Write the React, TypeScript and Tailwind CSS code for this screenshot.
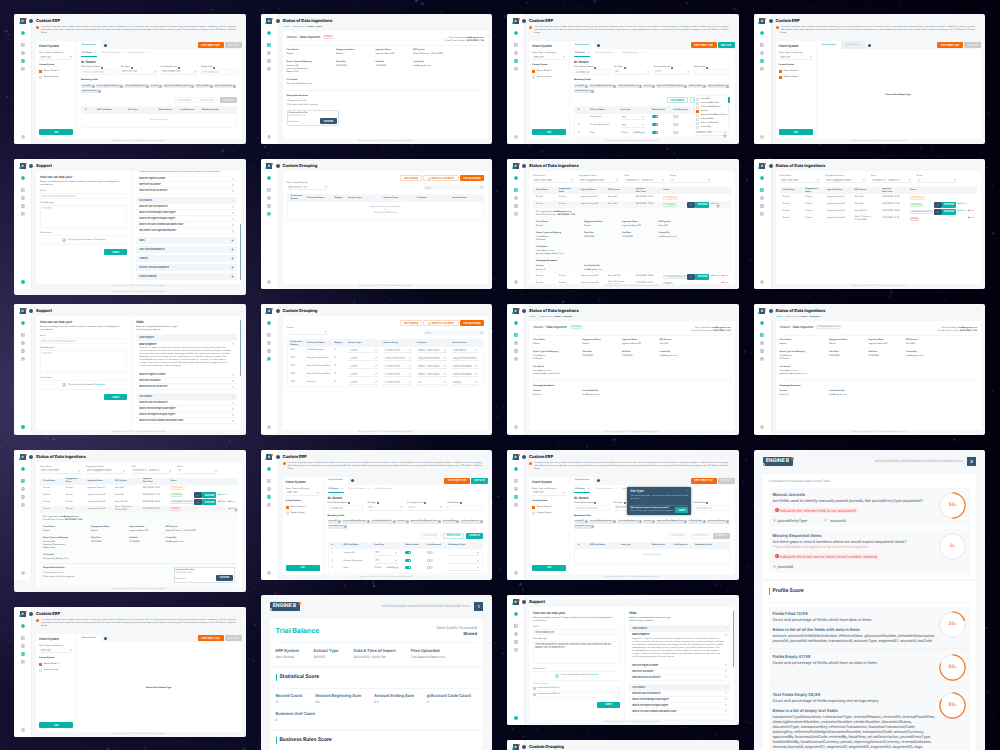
import { Fragment } from 'react'
import type { ReactNode } from 'react'
import {
  Check,
  ChevronDown,
  CirclePlus,
  Columns3,
  Download,
  FileText,
  FileUp,
  MessageSquareText,
  Minus,
  MousePointer2,
  Plus,
  Search,
  Server,
  Settings,
  X,
} from 'lucide-react'

const cn = (...parts: (string | false | undefined)[]) => parts.filter(Boolean).join(' ')

/* ---------- background ---------- */

const makeStars = (count: number) => {
  let seed = 7
  const next = () => {
    seed = (seed * 16807) % 2147483647
    return seed / 2147483647
  }
  return Array.from({ length: count }, () => ({
    x: next() * 1000,
    y: next() * 750,
    r: 0.5 + next() * next() * 1.1,
    o: 0.05 + next() * next() * 0.24,
  }))
}

const stars = makeStars(2600)

function NightSky() {
  return (
    <svg
      className="absolute inset-0 h-full w-full"
      viewBox="0 0 1000 750"
      preserveAspectRatio="xMidYMid slice"
      aria-hidden="true"
    >
      <defs>
        <linearGradient id="sky" x1="0" x2="1">
          <stop offset="0" stopColor="#131031" />
          <stop offset="0.45" stopColor="#06061b" />
          <stop offset="1" stopColor="#010110" />
        </linearGradient>
        <radialGradient id="haze">
          <stop offset="0" stopColor="#4a3d6e" stopOpacity="0.7" />
          <stop offset="1" stopColor="#4a3d6e" stopOpacity="0" />
        </radialGradient>
      </defs>
      <rect width="1000" height="750" fill="url(#sky)" />
      <ellipse cx="20" cy="400" rx="420" ry="290" fill="url(#haze)" />
      {stars.map((s, i) => (
        <circle key={i} cx={s.x} cy={s.y} r={s.r} fill="#b9c0e6" opacity={s.o} />
      ))}
    </svg>
  )
}

/* ---------- shared controls ---------- */

const buttonStyles = {
  teal: 'bg-[#08b3a9] text-white',
  orange: 'bg-[#f56a0a] text-white',
  gray: 'bg-[#cccccc] text-[#eeeeee]',
  navy: 'bg-[#36566f] text-white',
  tealOutline: 'border border-[#b9e9e5] bg-white text-[#08b3a9]',
  orangeOutline: 'border border-[#fcd9c0] bg-white text-[#f56a0a]',
  ghost: 'border border-[#f4f5f6] bg-white text-[#cfd2d5]',
}

type ButtonKind = keyof typeof buttonStyles

function Button({ kind, className, children }: { kind: ButtonKind; className?: string; children: ReactNode }) {
  return (
    <button
      type="button"
      className={cn(
        'flex h-[6px] shrink-0 items-center justify-center gap-px rounded-[1px] px-[4px] font-semibold whitespace-nowrap',
        buttonStyles[kind],
        className,
      )}
    >
      {children}
    </button>
  )
}

function SelectBox({ value, label, className }: { value: string; label: string; className?: string }) {
  return (
    <span className={cn('relative flex h-[5px] items-center border-b border-[#eceef0]', className)}>
      <select aria-label={label} className="h-full w-full appearance-none truncate bg-transparent px-px text-[#8b9299]">
        <option>{value}</option>
      </select>
      <ChevronDown className="pointer-events-none absolute right-px size-[2px] text-[#333]" strokeWidth={5} />
    </span>
  )
}

function InfoDot({ className }: { className?: string }) {
  return <span className={cn('inline-block size-[2px] shrink-0 rounded-full bg-[#36566f]', className)} />
}

function Toggle({ on, label }: { on?: boolean; label: string }) {
  return (
    <span className="relative inline-flex items-center">
      <input
        type="checkbox"
        aria-label={label}
        defaultChecked={on}
        className="peer h-[3px] w-[6px] appearance-none rounded-full bg-[#dcdfe2] checked:bg-[#08b3a9]"
      />
      <span className="pointer-events-none absolute left-0 size-[3px] rounded-full border border-[#c3c7cb] bg-white peer-checked:left-[3px] peer-checked:border-[#08b3a9]" />
    </span>
  )
}

function CheckRow({ label, checked }: { label: string; checked?: boolean }) {
  return (
    <label className="flex items-center gap-[2px] font-medium">
      <input
        type="checkbox"
        defaultChecked={checked}
        className="size-[3px] shrink-0 appearance-none border border-[#dcdfe2] bg-white checked:border-[#f56a0a] checked:bg-[#f56a0a]"
      />
      <span>{label}</span>
    </label>
  )
}

function LogoMark() {
  return (
    <span className="relative flex size-[6px] items-center justify-center bg-[#36566f] text-[3px] leading-[6px] font-bold text-white">
      B
      <span className="absolute top-0 -right-px size-[2px] rounded-full bg-[#f56a0a]" />
      <span className="absolute bottom-0 -left-px size-[2px] rounded-full bg-[#08b3a9]" />
    </span>
  )
}

/* ---------- application shell ---------- */

type Page = 'status' | 'erp' | 'grouping' | 'support'

const navItems = [
  { icon: Server, page: 'status', label: 'Status of data ingestions' },
  { icon: FileText, page: 'files', label: 'Files' },
  { icon: Columns3, page: 'erp', label: 'Custom ERP' },
  { icon: MessageSquareText, page: 'grouping', label: 'Custom grouping' },
]

function Screen({
  title,
  page,
  ratio = 'aspect-video',
  overlay,
  extraFooter,
  children,
}: {
  title: string
  page: Page
  ratio?: string
  overlay?: ReactNode
  extraFooter?: boolean
  children: ReactNode
}) {
  return (
    <section className={cn('relative flex w-full shrink-0 overflow-hidden rounded-[2px] bg-[#f5f7f9]', ratio)}>
      <nav className="relative flex h-[130px] w-[18px] shrink-0 flex-col items-center border-r border-[#eef0f3] bg-white pt-[4px] pb-[5px]">
        <LogoMark />
        <span className="absolute top-[5px] -right-[2px] flex size-[4px] items-center justify-center rounded-full bg-[#36566f]" />
        <a href="#new" aria-label="New" className="mt-[7px] text-[#10bfb3]">
          <CirclePlus className="size-[4px] fill-current" />
        </a>
        <div className="mt-[8px] flex flex-col gap-[4px]">
          {navItems.map((item) => (
            <a key={item.page} href={`#${item.page}`} aria-label={item.label}>
              <item.icon
                className={cn('size-[4px]', item.page === page ? 'fill-[#8fe0da] text-[#10bfb3]' : 'text-[#a0a6ac]')}
                strokeWidth={3}
              />
            </a>
          ))}
        </div>
        <a href="#settings" aria-label="Settings" className="mt-auto">
          {page === 'support' ? (
            <span className="block size-[4px] rounded-full bg-[#10bfb3]" />
          ) : (
            <Settings className="size-[4px] text-[#a0a6ac]" strokeWidth={3} />
          )}
        </a>
      </nav>
      <div className="flex min-w-0 flex-1 flex-col px-[4px]">
        <h2 className="h-[12px] shrink-0 pt-[2px] text-[4px] leading-[10px] font-extrabold text-[#20262d]">{title}</h2>
        <div className="flex min-h-0 flex-1 flex-col overflow-hidden">{children}</div>
        <footer className="shrink-0 text-center leading-[5px] text-[#b4b9be]">
          <p>Copyright Engine B Ltd - All Rights Reserved by Engine B</p>
          {extraFooter && <p className="pt-px">Copyright Engine B Ltd - All Rights Reserved by Engine B</p>}
        </footer>
      </div>
      {overlay}
    </section>
  )
}

/* ---------- custom ERP ---------- */

const chips = [
  'journalID',
  'currencyMasterNumber',
  'effectiveDateRecord',
  'amount',
  'approvedTrialBalanceCode',
  'effectiveDate',
  'glAccountNumber',
  'enteredAmount',
]

const menuOptions = [
  'journalID',
  'currencyMasterNo',
  'effectiveDateRecord',
  'amount',
  'approvedTrialBalanceCode',
  'effectiveDate',
  'glAccountNumber',
  'enteredBy',
]

const erpRows = [
  { name: 'Account No.', type: 'Text' },
  { name: 'Account Description', type: 'Text' },
  { name: 'Date', type: 'Date' },
]

function FieldMenu() {
  return (
    <div className="absolute bottom-full left-0 z-10 flex w-[33px] flex-col gap-px rounded-[1px] bg-white px-px py-[2px] shadow-[0_0_2px_rgba(0,0,0,0.12)]">
      {menuOptions.map((option) => (
        <CheckRow key={option} label={option} checked={option === 'amount'} />
      ))}
    </div>
  )
}

function ErpTable({ filled, menu }: { filled?: boolean; menu?: boolean }) {
  return (
    <table className="mt-[3px] w-full table-fixed border border-[#f6f7f8] text-left">
      <colgroup>
        <col className="w-[10%]" />
        <col className="w-[20%]" />
        <col className="w-[20%]" />
        <col className="w-[14%]" />
        <col className="w-[14%]" />
        <col className="w-[22%]" />
      </colgroup>
      <thead>
        <tr className="h-[7px] bg-[#f3f6f8] text-[#4b6c88]">
          <th className="pl-[3px]">#</th>
          <th>ERP Field Name</th>
          <th>Data Type</th>
          <th>Mode Actuals</th>
          <th>Field Required</th>
          <th>Mandatory Fields</th>
        </tr>
      </thead>
      <tbody>
        {!filled && (
          <tr className="h-[14px]">
            <td colSpan={6} className="text-center text-[#a5abb1]">
              No Items to Display
            </td>
          </tr>
        )}
        {filled &&
          erpRows.map((row, i) => (
            <tr key={row.name} className="h-[8px]">
              <td className="pl-[3px]">{i + 1}</td>
              <td>{row.name}</td>
              <td>
                {row.type === 'Date' ? (
                  <span className="flex justify-between pr-[7px]">
                    <span>☑ Date</span>
                    <span>dd/MM/yyyy</span>
                  </span>
                ) : (
                  <SelectBox label={`${row.name} type`} value={row.type} className="w-[24px]" />
                )}
              </td>
              <td>
                <Toggle on label={`${row.name} actuals`} />
              </td>
              <td>
                <Toggle label={`${row.name} required`} />
              </td>
              <td>
                <div className="relative">
                  <SelectBox
                    label={`${row.name} mandatory field`}
                    value={menu && i === 2 ? 'Mandatory Fields' : ''}
                    className="w-[32px]"
                  />
                  {menu && i === 2 && <FieldMenu />}
                  {menu && i === 2 && (
                    <MousePointer2 className="absolute -bottom-[2px] left-[28px] size-[4px] fill-white text-[#444]" />
                  )}
                </div>
              </td>
            </tr>
          ))}
      </tbody>
    </table>
  )
}

function ErpForm({ filled, menu }: { filled?: boolean; menu?: boolean }) {
  const fields = [
    { label: 'Client System Name', value: filled ? 'GL Details 001' : 'Enter the system name' },
    { label: 'File Type', value: filled ? 'CSV' : 'Select File Type', select: true },
    { label: 'Encoding Format', value: filled ? 'UTF-8' : 'Select Format Type', select: true },
    { label: 'Header Row', value: filled ? '1' : 'Enter header row' },
  ]
  return (
    <>
      <div className="flex h-[5px] shrink-0 gap-[5px]">
        <span className="flex gap-[3px] border-b border-[#08b3a9] px-px font-semibold text-[#36566f]">
          GL Details <span>×</span>
        </span>
        <span className="flex gap-[3px] text-[#9aa0a6]">
          Chart of Accounts <span>×</span>
        </span>
        <span className="flex gap-[3px] text-[#9aa0a6]">
          Payable Balances <span>×</span>
        </span>
      </div>
      <h4 className="mt-[4px] text-[3px] font-semibold text-[#2b3138]">GL Details</h4>
      <div className="mt-[2px] grid grid-cols-4 gap-[4px]">
        {fields.map((field) => (
          <label key={field.label} className="flex flex-col">
            <span className="flex items-center gap-px font-medium">
              {field.label} <InfoDot />
            </span>
            {field.select ? (
              <SelectBox label={field.label} value={field.value} className="h-[6px]" />
            ) : (
              <input
                className="h-[6px] w-full border border-[#f4f5f6] px-px text-[#8b9299] placeholder:text-[#b8bdc2]"
                defaultValue={filled ? field.value : ''}
                placeholder={field.value}
              />
            )}
          </label>
        ))}
      </div>
      <h4 className="mt-[4px] font-bold text-[#2b3138]">Mandatory Fields</h4>
      <div className="mt-[2px] flex flex-wrap gap-px">
        {chips.map((chip) => (
          <span key={chip} className="flex h-[4px] items-center gap-px rounded-[1px] bg-[#e6ebef] pl-px font-medium text-[#5f6b76]">
            {chip}
            <span className="size-[3px] rounded-full bg-[#a9b8c5]" />
          </span>
        ))}
      </div>
      <div className="mt-[4px] flex justify-end gap-[2px]">
        <Button kind={menu ? 'tealOutline' : 'ghost'} className="h-[5px] w-[21px]">
          Clear Mapping
        </Button>
        <Button kind={filled ? 'tealOutline' : 'ghost'} className="h-[5px] w-[21px]">
          Remove Rows
        </Button>
        <Button kind={filled ? 'teal' : 'gray'} className="h-[5px] w-[17px]">
          Upload File
        </Button>
      </div>
      <ErpTable filled={filled} menu={menu} />
    </>
  )
}

function HelpTip() {
  return (
    <div className="absolute top-[29%] left-[52%] flex h-[28px] w-[64px] flex-col rounded-[1px] bg-[#36566f] px-[3px] pt-[2px] pb-[2px] text-white shadow-[0_0_3px_rgba(0,0,0,0.4)]">
      <div className="flex justify-between">
        <h4 className="text-[3px] leading-[4px] font-semibold">File Type</h4>
        <X className="size-[2px]" />
      </div>
      <p className="mt-[2px] text-[#c3d0dc]">The supported types - text or comma separated are available for import.</p>
      <div className="mt-auto flex items-center justify-between border-t border-[#4a6a84] pt-px">
        <div>
          <p className="font-bold">Didn't get an answer for your question?</p>
          <p className="text-[#c3d0dc]">We can help, get in touch with us for support</p>
        </div>
        <Button kind="teal" className="w-[13px]">
          Submit
        </Button>
      </div>
    </div>
  )
}

function ErpScreen({
  mode,
  menu,
  tip,
  systemTab,
  system,
  ready,
}: {
  mode: 'select' | 'empty' | 'filled'
  menu?: boolean
  tip?: boolean
  systemTab?: boolean
  system?: boolean
  ready?: boolean
}) {
  return (
    <Screen title="Custom ERP" page="erp" overlay={tip && <HelpTip />}>
      <div className="flex h-[15px] shrink-0 gap-[2px]">
        <span className="size-[3px] shrink-0 rounded-full bg-[#f56a0a]" />
        <p className="pr-[4px]">
          To create a new ERP map, or select one not listed in the library, click on one of the options and fill in the
          form. You can map multiple or standard tables as the System Group or a selection of the file, mapping rules
          before, which must meet their criteria to be imported. For this reason the fields are split by extract, please
          select one of them or create a group. The threshold for mapping is set at 70. Details in Custom Group.
        </p>
      </div>
      <div className="flex min-h-0 flex-1 gap-px">
        <aside className="flex w-[40px] shrink-0 flex-col rounded-[1px] bg-white px-[3px] pt-[4px] pb-[4px]">
          <h3 className="text-[3px] font-semibold text-[#2b3138]">Client System</h3>
          <label className="mt-[4px] flex flex-col">
            <span>Select Type and Mapping</span>
            <SelectBox label="Select type and mapping" value="Trade Type" />
          </label>
          <h4 className="mt-[4px] font-bold text-[#2b3138]">Custom System</h4>
          <div className="mt-[3px] flex flex-col gap-[3px]">
            <CheckRow label="Report Extract 1" checked />
            <CheckRow label="System Extract" checked={system} />
          </div>
          <Button kind="teal" className="mt-auto">
            Add
          </Button>
        </aside>
        <div className="flex min-w-0 flex-1 flex-col">
          <div className="flex h-[8px] shrink-0 items-center">
            <span className="flex h-full items-center rounded-t-[1px] bg-white px-[5px] font-bold text-[#08b3a9]">
              Report Extract
            </span>
            {systemTab && (
              <span className="flex h-full items-center bg-[#eceff2] px-[5px] text-[#9aa0a6]">System Extract</span>
            )}
            <InfoDot className="ml-[3px] size-[3px]" />
            <div className="ml-auto flex gap-px">
              <Button kind="orange" className="w-[26px]">
                Select Report Type
              </Button>
              <Button kind={ready ? 'teal' : 'gray'} className="w-[17px]">
                Save & Exit
              </Button>
            </div>
          </div>
          <div className="flex min-h-0 flex-1 flex-col overflow-hidden rounded-b-[1px] bg-white pt-[3px] pr-[5px] pl-[4px]">
            {mode === 'select' ? (
              <p className="m-auto font-bold text-[#2b3138]">Please Select Report Type</p>
            ) : (
              <ErpForm filled={mode === 'filled'} menu={menu} />
            )}
          </div>
        </div>
      </div>
    </Screen>
  )
}

/* ---------- status of data ingestions ---------- */

const badgeStyles = {
  pending: 'border-[#fce6c4] bg-[#fffaf0] text-[#f0a93c]',
  complete: 'border-[#cdeecf] bg-[#f1fbf2] text-[#46b450]',
  warning: 'border-[#dfe6ec] bg-[#f7fafc] text-[#6b7f92]',
  failed: 'border-[#fbcdd0] bg-[#fff5f5] text-[#ef4750]',
}

type BadgeKind = keyof typeof badgeStyles

const badgeText = {
  pending: 'In Progress',
  complete: 'Complete',
  warning: 'Completed with errors',
  failed: 'Failed',
}

function Badge({ kind }: { kind: BadgeKind }) {
  return (
    <span
      className={cn(
        'inline-flex h-[4px] items-center rounded-[1px] border px-px leading-[2px] font-normal whitespace-nowrap',
        badgeStyles[kind],
      )}
    >
      {badgeText[kind]}
    </span>
  )
}

function Detail({ label, lines }: { label: string; lines: string[] }) {
  return (
    <div>
      <dt className="mb-px font-bold text-[#3f6486]">{label}</dt>
      {lines.map((line) => (
        <dd key={line} className="font-medium whitespace-nowrap">
          {line}
        </dd>
      ))}
    </div>
  )
}

function DetailGrid({ failed, tight }: { failed?: boolean; tight?: boolean }) {
  return (
    <dl className={cn('grid grid-cols-[25fr_20fr_19fr_36fr]', tight ? 'gap-y-[4px]' : 'gap-y-[5px]')}>
      <Detail label="Client Name" lines={['Shared']} />
      <Detail label="Engagement Name" lines={['Shared']} />
      <Detail label="Ingestion Name" lines={['Ingestion Name 001']} />
      <Detail label="ERP System" lines={[failed ? 'Xplan 10 Custom - 10 Nov 2022' : 'Xero (UK)']} />
      <Detail
        label="Report Type and Mapping"
        lines={failed ? ['Inventory GL', 'Inventory Transactions', 'Balance One'] : ['Trial Balance', 'GL Details']}
      />
      <Detail label="Start Date" lines={['01/01/2022']} />
      <Detail label="End Date" lines={['31/12/2022']} />
      <Detail label="Created By" lines={['dev@engineb.com']} />
      <Detail
        label="File Upload"
        lines={failed ? ['FY_Load_GL_Backup_7.csv'] : ['trial_balance_7.csv', 'general_ledger_details_7.csv']}
      />
    </dl>
  )
}

function ErrorFileBox({ className }: { className?: string }) {
  return (
    <div className={cn('flex h-[16px] flex-col rounded-[1px] border border-[#d8e2ea] bg-white p-px', className)}>
      <p className="font-semibold text-[#3f6486]">Download Error File</p>
      <p className="text-[#a5abb1]">26/10/2022, 11:34</p>
      <div className="mt-auto flex items-end justify-between">
        <span>Errors.csv</span>
        <Button kind="navy" className="h-[4px] w-[17px]">
          <Download className="size-[2px]" /> Download
        </Button>
      </div>
    </div>
  )
}

function Steps() {
  return (
    <div>
      <h4 className="font-bold text-[#2b3138]">Steps to Resolve Error</h4>
      <ol className="mt-[2px] flex flex-col gap-px">
        <li>1. Download error file</li>
        <li>2. Re-upload the file for ingestion</li>
      </ol>
    </div>
  )
}

function GroupingInfo() {
  return (
    <>
      <h4 className="font-bold text-[#2b3138]">Grouping Information</h4>
      <dl className="mt-[2px] grid grid-cols-[25fr_75fr]">
        <Detail label="Version" lines={['Version 3']} />
        <Detail label="Last Updated By" lines={['dev@engineb.com']} />
      </dl>
    </>
  )
}

function StatusDetailScreen({ kind }: { kind: BadgeKind }) {
  const failed = kind === 'failed'
  return (
    <Screen title="Status of Data Ingestions" page="status">
      <p className="flex h-[5px] shrink-0 gap-[3px]">
        <a href="#status" className="font-semibold text-[#08b3a9]">
          &lt; Back
        </a>
        <span>
          Status of Data / <span className="font-semibold text-[#2b3138]">Shared - {badgeText[kind].split(' ')[0]}</span>
        </span>
      </p>
      <div className="flex-1 rounded-[1px] bg-white px-[4px] pt-[4px]">
        <div className="flex justify-between">
          <h3 className="flex items-center gap-[3px] self-start text-[3px] leading-[4px] font-medium text-[#2b3138]">
            <span>
              <span className="text-[#3f6486]">Shared</span> - Data Ingestion
            </span>
            <span className="flex text-[2px]">
              <Badge kind={kind} />
            </span>
          </h3>
          <div className="pt-[2px] text-right">
            <p>
              Data ingested by: <b className="font-semibold text-[#2b3138]">dev@engineb.com</b>
            </p>
            <p>
              Date & Time of Import: <b className="font-semibold text-[#2b3138]">26/10/2022, 11:34</b>
            </p>
          </div>
        </div>
        <div className="mt-[2px] border-t border-[#f6f7f8] pt-[3px]">
          <DetailGrid failed={failed} />
        </div>
        <div className="mt-[4px] border-t border-[#f3f4f6] pt-[4px]">
          {failed ? (
            <>
              <Steps />
              <ErrorFileBox className="mt-[3px] w-[52px]" />
            </>
          ) : (
            <GroupingInfo />
          )}
        </div>
      </div>
    </Screen>
  )
}

const ingestions: { client: string; name: string; erp: string; date: string; status: BadgeKind }[] = [
  { client: 'Shared', name: 'Ingestion Name 01', erp: 'Xero (UK)', date: '26/10/2022, 10:22', status: 'pending' },
  { client: 'Shared', name: 'Ingestion Name 02', erp: 'Xero (UK)', date: '25/10/2022, 17:40', status: 'complete' },
  { client: 'Shared', name: 'Ingestion Name 03', erp: 'Xero (UK) 3P', date: '20/10/2022, 09:22', status: 'warning' },
  { client: 'Shared', name: 'Ingestion Name 04', erp: 'Xplan 10 Custom - 10 Nov 2022', date: '12/10/2022, 14:22', status: 'failed' },
]

const filters = ['Client Name', 'Engagement Name', 'Date', 'Status']

function StatusListScreen({ open, tall }: { open?: number; tall?: boolean }) {
  return (
    <Screen title="Status of Data Ingestions" page="status" ratio={tall ? 'aspect-[13/8]' : 'aspect-video'}>
      <div className="min-h-0 flex-1 overflow-hidden rounded-[1px] bg-white px-[4px] pt-[4px]">
        <div className="grid w-[90%] grid-cols-4 gap-[5px]">
          {filters.map((filter) => (
            <label key={filter} className="flex flex-col">
              <span>{filter}</span>
              <SelectBox
                label={filter}
                value={filter === 'Status' ? 'All' : filter === 'Date' ? '▢ dd/mm/yyyy   -   dd/mm/yyyy' : `Select ${filter}`}
              />
            </label>
          ))}
        </div>
        <table className="mt-[4px] w-full table-fixed text-left">
          <colgroup>
            <col className="w-[13%]" />
            <col className="w-[11%]" />
            <col className="w-[14%]" />
            <col className="w-[14%]" />
            <col className="w-[14%]" />
            <col className="w-[12%]" />
            <col className="w-[22%]" />
          </colgroup>
          <thead>
            <tr className="h-[7px] bg-[#f3f6f8] text-[#4b6c88]">
              <th className="pl-[3px]">Client Name</th>
              <th>
                Engagement
                <br />
                Name
              </th>
              <th>Ingestion Name</th>
              <th>ERP System</th>
              <th>
                Ingestion
                <br />
                Date/Time
              </th>
              <th>Status</th>
              <th aria-label="Actions" />
            </tr>
          </thead>
          <tbody>
            {ingestions.map((row, i) => (
              <Fragment key={row.name}>
                <tr className={cn('h-[7px]', open === i && 'bg-[#f5f7f9]')}>
                  <td className="pl-[3px]">{row.client}</td>
                  <td>{row.client}</td>
                  <td>{row.name}</td>
                  <td className="pr-[8px]">{row.erp}</td>
                  <td>{row.date}</td>
                  <td>
                    <span className="flex">
                      <Badge kind={row.status} />
                    </span>
                  </td>
                  <td>
                    <div className="flex items-center">
                      {(row.status === 'complete' || row.status === 'warning') && (
                        <>
                          <Button kind="navy" className="h-[4px] w-[4px] px-0">
                            ▪
                          </Button>
                          <Button kind="teal" className="h-[4px] w-[14px] px-0">
                            <Download className="size-[2px]" /> Download
                          </Button>
                          <a href="#details" className="ml-[2px] whitespace-nowrap text-[#08b3a9]">
                            ◉ Details
                          </a>
                        </>
                      )}
                      {(row.status === 'warning' || row.status === 'failed') && (
                        <a href="#error" className="mr-[2px] ml-auto whitespace-nowrap text-[#ef4750]">
                          ◉ Error
                        </a>
                      )}
                      {open === i && (
                        <span className="relative">
                          <MousePointer2 className="absolute -top-px -left-[4px] size-[4px] fill-white text-[#444]" />
                        </span>
                      )}
                    </div>
                  </td>
                </tr>
                {open === i && (
                  <tr className="bg-[#fbfcfc]">
                    <td colSpan={7} className="px-[3px] pt-[3px] pb-px">
                      <p>
                        Data ingested by: <b className="font-semibold text-[#2b3138]">dev@engineb.com</b>
                      </p>
                      <p>
                        Date & Time of Import: <b className="font-semibold text-[#2b3138]">26/10/2022, 11:34</b>
                      </p>
                      <div className="mt-[4px]">
                        <DetailGrid tight failed={row.status === 'failed'} />
                      </div>
                      {row.status === 'failed' ? (
                        <div className="mt-[2px] flex items-start justify-between border-t border-[#eef0f2] pt-[3px] pb-[3px]">
                          <Steps />
                          <ErrorFileBox className="w-[61px] border-[#b5c7d5]" />
                        </div>
                      ) : (
                        <div className="mt-[4px]">
                          <GroupingInfo />
                        </div>
                      )}
                    </td>
                  </tr>
                )}
              </Fragment>
            ))}
          </tbody>
        </table>
      </div>
    </Screen>
  )
}

/* ---------- custom grouping ---------- */

const accounts = [
  { id: '1001', name: 'Trade Receivables', type: '1. Assets', group: '1. Current Assets', caption: 'Property, Plant & Equip', account: 'Trade Debtors' },
  { id: '1012', name: 'Long term investments', type: '1. Assets', group: '1. Non-current Assets', caption: 'Long-term investments', account: 'Long-term Investments' },
  { id: '1070', name: 'Prepaid and Accrued Exp', type: '1. Assets', group: '1. Current Assets', caption: 'Property, Plant & Equip', account: 'Trade & receivables' },
  { id: '1080', name: 'Prepaid and Accrued Exp', type: '1. Assets', group: '1. Current Assets', caption: 'Property, Plant & Equip', account: 'Trade & receivables' },
  { id: '1140', name: 'Inventory', type: '1. Assets', group: '1. Current Assets', caption: 'VAT', account: 'Building' },
]

function GroupingScreen({ filled }: { filled?: boolean }) {
  return (
    <Screen title="Custom Grouping" page="grouping">
      <div className="min-h-0 flex-1 overflow-hidden rounded-[1px] bg-white px-[4px] pt-[4px]">
        <div className="flex justify-end gap-px">
          <Button kind="orangeOutline" className="w-[22px]">
            Save Grouping
          </Button>
          <Button kind="orangeOutline" className="w-[36px]">
            ⇪ Upload COA TB/Balance
          </Button>
          <Button kind="orange" className="w-[24px]">
            Existing Grouping
          </Button>
        </div>
        <div className="mt-px flex items-end justify-between">
          <label className="flex w-[41px] flex-col">
            <span>{filled ? 'Version' : 'Select Client/Mapping'}</span>
            <SelectBox label="Version" value={filled ? '1' : 'Select Version - Live'} />
          </label>
          <label className="flex h-[5px] w-[60px] items-center bg-[#f5f7f9] px-px">
            <input aria-label="Search" placeholder="Search" className="h-full min-w-0 flex-1 placeholder:text-[#b8bdc2]" />
            <Search className="size-[3px] text-[#9aa0a6]" />
          </label>
        </div>
        <table className="mt-[4px] w-full table-fixed border border-[#f6f7f8] text-left">
          <colgroup>
            <col className="w-[10%]" />
            <col className="w-[14%]" />
            <col className="w-[7%]" />
            <col className="w-[18%]" />
            <col className="w-[17%]" />
            <col className="w-[18%]" />
            <col className="w-[16%]" />
          </colgroup>
          <thead>
            <tr className="h-[7px] bg-[#f3f6f8] text-[#4b6c88]">
              <th className="pl-[3px]">
                GL Account
                <br />
                Number
              </th>
              <th>GL Account Name</th>
              <th>Mapped</th>
              <th>Account Type</th>
              <th>Account Group</th>
              <th>Is Caption</th>
              <th>Account Name</th>
            </tr>
          </thead>
          <tbody>
            {filled ? (
              accounts.map((row) => (
                <tr key={row.id} className="h-[8px]">
                  <td className="pl-[3px]">{row.id}</td>
                  <td className="whitespace-nowrap">{row.name}</td>
                  <td>☑</td>
                  {[row.type, row.group, row.caption, row.account].map((value, i) => (
                    <td key={i} className="pr-[5px]">
                      <SelectBox label={`${row.name} ${value}`} value={value} />
                    </td>
                  ))}
                </tr>
              ))
            ) : (
              <tr className="h-[19px] text-center text-[#8b9299]">
                <td colSpan={7}>
                  Please use to Existing Grouping
                  <br />
                  or
                  <br />
                  Upload COA TB/Balance
                </td>
              </tr>
            )}
          </tbody>
        </table>
      </div>
    </Screen>
  )
}

/* ---------- support ---------- */

const answer =
  'Engine B is a digital transformation business company that uses a common data platform to transform the work of professional services. Access to quality data, enabling intelligent and deep learning based, powered by the best technology available. Our collaboration approach has been developed with our technology partners, industry users and the UK professional bodies. The Knowledge Graph analysis can be used on all of the models for all parties, for client reports, analysis, audit and risk to the same level. Making available tools and time to insight which are transforming the quality of the work they do.'

const aboutQuestions = ['What are Engine B Funded?', 'Where are you based?', 'What sectors do you service?']

const productQuestions = [
  'What are your core products?',
  'What is the Knowledge Graph Engine?',
  'What is the Engine B Insights Engine?',
  'What is the Audit Common Data Model(CDM)?',
  "Why doesn't use Engine Marketplace?",
]

const moreSections = ['SMEs', 'Data Types and Mandates', 'Usability', 'Security, Risk and Compliance', 'Product Roadmap']

function FaqHeader({ title, closed }: { title: string; closed?: boolean }) {
  return (
    <button
      type="button"
      className="mt-[2px] flex h-[7px] w-full shrink-0 items-center justify-between bg-[#f3f6f8] px-[3px] font-bold text-[#3f6486]"
    >
      {title}
      {closed ? <Plus className="size-[3px]" strokeWidth={3} /> : <Minus className="size-[2px]" />}
    </button>
  )
}

function FaqList({ questions }: { questions: string[] }) {
  return (
    <div className="pb-px">
      {questions.map((question) => (
        <button
          key={question}
          type="button"
          className="flex h-[6px] w-full items-center justify-between border-b border-[#f5f6f7] px-[3px] font-semibold text-[#3b4249]"
        >
          {question}
          <ChevronDown className="size-[2px]" strokeWidth={5} />
        </button>
      ))}
    </div>
  )
}

function SupportScreen({ scrolled, sent }: { scrolled?: boolean; sent?: boolean }) {
  return (
    <Screen
      title="Support"
      page="support"
      ratio={scrolled ? 'aspect-[17/10]' : 'aspect-video'}
      extraFooter={scrolled}
    >
      <div className="grid min-h-0 flex-1 grid-cols-[95fr_109fr] gap-px">
        <form className="flex flex-col bg-white px-[4px] pt-[4px]">
          <h3 className="text-[3px] leading-[4px] font-semibold text-[#2b3138]">How can we help you?</h3>
          <p className="mt-[2px] font-medium">
            Support is usually monitored. Contact us with our customer support building admin
            <br />
            on a chat box.
          </p>
          <label className="mt-[3px] flex flex-col">
            Email*
            <input
              type="email"
              className="h-[6px] border border-[#f4f5f6] px-px placeholder:text-[#b8bdc2]"
              placeholder="Enter your registered email address"
              defaultValue={sent ? 'johndoe@gmail.com' : ''}
            />
          </label>
          <label className="mt-[3px] flex flex-col">
            Your Message*
            <textarea
              className="h-[23px] resize-none border border-[#f4f5f6] px-px pt-px placeholder:text-[#b8bdc2]"
              placeholder="Type here..."
              defaultValue={
                sent ? 'There was a problem to upload the custom ERP extract and the data set was not mapped, can you please assist?' : ''
              }
            />
          </label>
          <p className="mt-[4px]">Attachments</p>
          <div className="flex h-[10px] items-center justify-center gap-[2px] border-y border-[#f5f6f7]">
            <FileUp className="size-[4px] text-[#08b3a9]" />
            <span>
              Drag and drop files here or <a href="#browse" className="font-semibold text-[#08b3a9]">Choose file</a>
            </span>
          </div>
          {sent && (
            <div className="mt-[2px] flex flex-col">
              <p className="text-[#a5abb1]">2 Files attached</p>
              {['customerextract001.csv', 'customerextract002.csv'].map((file) => (
                <p key={file} className="flex h-[6px] items-center gap-px border-b border-[#f5f6f7]">
                  <FileText className="size-[3px] text-[#08b3a9]" /> {file}
                  <X className="ml-auto size-[2px]" />
                </p>
              ))}
            </div>
          )}
          <Button kind="teal" className="mt-[4px] w-[23px] self-end">
            Submit
          </Button>
        </form>
        <div className="relative min-h-0 overflow-hidden bg-white pr-[4px] pl-[4px]">
          {scrolled ? (
            <>
              <p className="mb-[2px] px-[3px]">makes available tools and time for enhancing the quality of audit and accounting work.</p>
              <FaqList questions={aboutQuestions} />
            </>
          ) : (
            <>
              <h3 className="pt-[4px] text-[3px] leading-[4px] font-semibold text-[#2b3138]">FAQs</h3>
              <p className="mt-[2px] mb-px font-medium">
                Read our frequently asked questions to get
                <br />
                started using our website.
              </p>
              <FaqHeader title="About Engine B" />
              <button
                type="button"
                className="flex h-[6px] w-full items-center justify-between px-[3px] font-bold text-[#2b3138]"
              >
                What is Engine B?
                <ChevronDown className="size-[2px]" strokeWidth={5} />
              </button>
              <p className="px-[3px] pb-[4px]">{answer}</p>
              <FaqList questions={aboutQuestions} />
            </>
          )}
          <FaqHeader title="Our Products" />
          <FaqList questions={scrolled ? productQuestions : productQuestions.slice(0, 4)} />
          {scrolled && moreSections.map((title) => <FaqHeader key={title} title={title} closed />)}
          <span
            className={cn(
              'absolute right-0 w-px rounded-full bg-[#8ca2b6]',
              scrolled ? 'top-[47%] bottom-[4px]' : 'top-[4px] bottom-[47%]',
            )}
          />
        </div>
      </div>
    </Screen>
  )
}

/* ---------- printed reports ---------- */

function ReportPage({ number, children }: { number: number; children: ReactNode }) {
  return (
    <section className="flex w-full shrink-0 flex-col rounded-t-[2px] bg-[#f5f7f9] px-[9px] pt-[7px] text-[4px] leading-[5px]">
      <header className="mb-[7px] flex h-[10px] items-center">
        <span className="relative flex h-[9px] w-[30px] items-center justify-center rounded-[1px] bg-[#36566f] text-[5px] font-bold text-white">
          ENGINE B
          <span className="absolute top-0 -right-px size-[3px] rounded-full bg-[#f56a0a]" />
          <span className="absolute bottom-0 -left-px size-[3px] rounded-full border border-white bg-[#08b3a9]" />
        </span>
        <span className="ml-auto font-[Roboto,sans-serif] text-[3px] text-[#9aa0a6]">
          DATA PROCESSED USING ENGINE B INTEGRATION ENGINE V2.0.2
        </span>
        <span className="ml-[4px] flex size-[9px] items-center justify-center bg-[#36566f] font-bold text-white">
          {number}
        </span>
      </header>
      {children}
    </section>
  )
}

function ReportField({ label, value }: { label: string; value: string }) {
  return (
    <div>
      <dt className="font-bold text-[#56748f]">{label}</dt>
      <dd className="mt-[2px] text-[3px] text-[#6b7280]">{value}</dd>
    </div>
  )
}

function ReportHeading({ children }: { children: ReactNode }) {
  return (
    <h3 className="flex items-center gap-[3px] border-b border-[#f3f4f6] pb-[7px] text-[5px] leading-[7px] font-bold text-[#2b3138]">
      <span className="h-[7px] w-px bg-[#10bfb3]" />
      {children}
    </h3>
  )
}

function TrialBalanceReport() {
  return (
    <ReportPage number={1}>
      <div className="rounded-[1px] bg-white px-[6px] pt-[6px] pb-[6px]">
        <div className="flex items-start justify-between border-b border-[#f3f4f6] pb-[5px]">
          <h2 className="text-[7px] leading-[11px] font-bold text-[#10bfb3]">Trial Balance</h2>
          <div className="text-right leading-[6px]">
            <p className="font-[Roboto,sans-serif] text-[#8b9299]">Data Quality Scorecard</p>
            <p className="font-bold text-[#36566f]">Shared</p>
          </div>
        </div>
        <dl className="flex gap-[15px] pt-[5px]">
          <ReportField label="ERP System" value="Xero (Global)" />
          <ReportField label="Extract Type" value="REPORT" />
          <ReportField label="Date & Time of Import" value="26/01/2023, 04:50 PM" />
          <ReportField label="Files Uploaded" value="Trial Balance Report.csv" />
        </dl>
      </div>
      <div className="mt-[2px] rounded-[1px] bg-white px-[6px] pt-[6px] pb-[6px]">
        <ReportHeading>Statistical Score</ReportHeading>
        <dl className="flex flex-wrap gap-x-[13px] gap-y-[6px] pt-[4px]">
          <ReportField label="Record Count" value="11" />
          <ReportField label="Amount Beginning Sum" value="0.0" />
          <ReportField label="Amount Ending Sum" value="0.0" />
          <ReportField label="glAccount Code Count" value="11" />
          <ReportField label="Business Unit Count" value="0" />
        </dl>
      </div>
      <div className="mt-[2px] bg-white px-[6px] pt-[6px] pb-[40px]">
        <ReportHeading>Business Rules Score</ReportHeading>
      </div>
    </ReportPage>
  )
}

function Donut({ value }: { value: number }) {
  const length = 2 * Math.PI * 12.6
  return (
    <div className="relative flex size-[27px] shrink-0 items-center justify-center">
      <svg viewBox="0 0 27 27" className="absolute inset-0 -rotate-90" aria-hidden="true">
        <circle cx="13.5" cy="13.5" r="12.6" fill="#fff" stroke="#e9ebee" strokeWidth="1.2" />
        <circle
          cx="13.5"
          cy="13.5"
          r="12.6"
          fill="none"
          stroke="#f5781f"
          strokeWidth="1.2"
          strokeDasharray={`${(length * value) / 100} ${length}`}
        />
      </svg>
      <span className="relative text-[5px] font-semibold text-[#f5894a]">
        {value}
        <span className="text-[3px]">%</span>
      </span>
    </div>
  )
}

function Warning({ children }: { children: ReactNode }) {
  return (
    <p className="flex w-fit items-center gap-px rounded-[1px] bg-[#fdebec] px-[2px] text-[#e5565f]">
      <span className="flex size-[4px] items-center justify-center rounded-full bg-[#e0434d] text-[3px] text-white">×</span>
      {children}
    </p>
  )
}

function ScoreBlock({
  title,
  text,
  value,
  roomy,
  children,
}: {
  title: string
  text: string
  value: number
  roomy?: boolean
  children?: ReactNode
}) {
  return (
    <div className={cn('flex justify-between gap-[10px] bg-[#f8f9fb] px-[4px] font-[Roboto,sans-serif]', roomy ? 'py-[5px]' : 'py-[4px]')}>
      <div className="min-w-0">
        <h4 className="font-[Inter,sans-serif] font-bold text-[#56748f]">{title}</h4>
        <p className="mt-px">{text}</p>
        {children}
      </div>
      <Donut value={value} />
    </div>
  )
}

const filledFields = [
  'amount, amountCreditDebitIndicator, effectiveDate, glAccountNumber, jeHeaderDescription,',
  'journalId, journalIdLineNumber, transactionId, accountType, segment01, sourceId, taxCode',
]

const emptyFields = [
  'transactionTypeDescription, transactionType, reversalReason, reversalID, reversalFiscalYear,',
  'clearingDocumentNumber, customerNumber, vendorNumber, documentStatus,',
  'documentType, transactionKey, referenceTransaction, businessTransactionCode,',
  'postingKey, referenceSubledgerDocumentNumber, transactionCode, amountCurrency,',
  'approvedBy, businessUnitCode, enteredBy, fiscalYear, jeLineDescription, journalEntryType,',
  'lastModifiedBy, localAmountCurrency, period, reportingAmountCurrency, reversalIndicator,',
  'reversalJournalId, segment01, segment02, segment03, segment04, segment05, tags,',
  'taxCode, userDefined1, userDefined2',
]

function ProfileReport() {
  return (
    <ReportPage number={2}>
      <div className="rounded-[1px] bg-white px-[6px] pt-[5px] pb-[6px] text-[#50565d]">
        <p className="mb-[4px] text-[3px] text-[#8b9299]">Continuation of Business Rules Score Table</p>
        <ScoreBlock title="Manual Journals" text="Are fields used to identify manually posted journals, like journalEntryType populated?" value={50}>
          <div className="mt-[5px]">
            <Warning>Indicates the relevant field is not populated</Warning>
          </div>
          <p className="mt-[5px] flex items-center gap-[2px]">
            <X className="size-[3px] text-[#e0434d]" strokeWidth={4} /> journalEntryType
            <Check className="ml-[15px] size-[4px] text-[#3fae5a]" strokeWidth={3} /> sourceId
          </p>
        </ScoreBlock>
        <div className="mt-[2px]">
          <ScoreBlock title="Missing Sequential Items" text="Are there gaps in record numbers where we would expect sequential items?" value={0}>
            <p className="text-[#f19aa0]">**journalId does not appear to be a numeric sequence</p>
            <div className="mt-[5px]">
              <Warning>Indicates there are one or more record number missing</Warning>
            </div>
            <p className="mt-[5px] flex items-center gap-[2px]">
              <X className="size-[3px] text-[#e0434d]" strokeWidth={4} /> journalId
            </p>
          </ScoreBlock>
        </div>
      </div>
      <div className="mt-[2px] bg-white px-[6px] pt-[7px] text-[#50565d]">
        <ReportHeading>Profile Score</ReportHeading>
        <div className="mt-[3px] flex flex-col">
          <ScoreBlock roomy title="Fields Filled 12/59" text="Count and percentage of fields which have data in them." value={20}>
            <h4 className="mt-[5px] font-[Inter,sans-serif] font-bold text-[#56748f]">Below is list of all the fields with data in them</h4>
            <div className="mt-px whitespace-nowrap">
              {filledFields.map((line) => (
                <p key={line}>{line}</p>
              ))}
            </div>
          </ScoreBlock>
          <div className="border-y border-[#f1f3f5]">
            <ScoreBlock roomy title="Fields Empty 47/59" text="Count and percentage of fields which have no data in them." value={80} />
          </div>
          <ScoreBlock roomy title="Text Fields Empty 38/46" text="Count and percentage of fields expecting text strings empty." value={83}>
            <h4 className="mt-[5px] font-[Inter,sans-serif] font-bold text-[#56748f]">Below is a list of empty text fields</h4>
            <div className="mt-px whitespace-nowrap">
              {emptyFields.map((line) => (
                <p key={line}>{line}</p>
              ))}
            </div>
          </ScoreBlock>
        </div>
      </div>
    </ReportPage>
  )
}

/* ---------- board ---------- */

export default function App() {
  return (
    <main className="relative h-screen overflow-hidden bg-[#06061b] font-[Inter,'Liberation_Sans',sans-serif] text-[2px] leading-[3px] text-[#5b636b] [text-rendering:geometricPrecision]">
      <NightSky />
      <div className="relative grid grid-cols-4 gap-[15px] pt-[14px] pr-[15px] pl-[14px]">
        <div className="flex flex-col gap-[15px]">
          <ErpScreen mode="empty" />
          <div className="flex flex-col gap-[9px]">
            <SupportScreen scrolled />
            <SupportScreen />
          </div>
          <StatusListScreen open={3} tall />
          <ErpScreen mode="select" />
        </div>
        <div className="flex flex-col gap-[15px]">
          <StatusDetailScreen kind="failed" />
          <GroupingScreen />
          <GroupingScreen filled />
          <ErpScreen mode="filled" ready />
          <TrialBalanceReport />
        </div>
        <div className="flex flex-col gap-[15px]">
          <ErpScreen mode="filled" menu ready />
          <StatusListScreen open={1} />
          <StatusDetailScreen kind="complete" />
          <ErpScreen mode="empty" tip />
          <SupportScreen sent />
          <GroupingScreen />
        </div>
        <div className="flex flex-col gap-[15px]">
          <ErpScreen mode="select" systemTab system />
          <StatusListScreen />
          <StatusDetailScreen kind="warning" />
          <ProfileReport />
        </div>
      </div>
    </main>
  )
}
